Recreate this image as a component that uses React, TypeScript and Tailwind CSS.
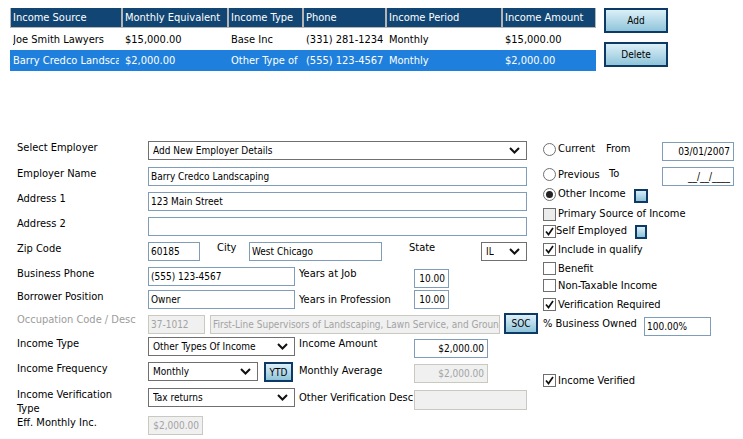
import React from "react";

const rows = [
  ["Joe Smith Lawyers", "$15,000.00", "Base Inc", "(331) 281-1234", "Monthly", "$15,000.00"],
  ["Barry Credco Landscaping", "$2,000.00", "Other Type of Income", "(555) 123-4567", "Monthly", "$2,000.00"],
];
const heads = ["Income Source", "Monthly Equivalent", "Income Type", "Phone", "Income Period", "Income Amount"];
const widths = ["w-[112px]", "w-[106px]", "w-[75px]", "w-[83px]", "w-[116px]", "w-[94px]"];

const Chevron = () => (
  <svg width="11" height="7" viewBox="0 0 11 7" className="shrink-0">
    <polyline points="1,1 5.5,5.5 10,1" fill="none" stroke="#111" strokeWidth="2" />
  </svg>
);

const Check = () => (
  <svg width="11" height="11" viewBox="0 0 11 11">
    <polyline points="2,5.5 4.5,8.5 9,2" fill="none" stroke="#111" strokeWidth="1.7" />
  </svg>
);

const Select = ({ w, value }: { w: string; value: string }) => (
  <div className={`${w} h-[19px] border border-[#707070] bg-white flex items-center justify-between pl-[4px] pr-[6px] text-[10px]`}>
    <span className="truncate">{value}</span>
    <Chevron />
  </div>
);

const Input = ({ w, value = "", right = false, disabled = false, h = "h-[19px]" }: { w: string; value?: string; right?: boolean; disabled?: boolean; h?: string }) => (
  <div
    className={`${w} ${h} border flex items-center text-[10px] overflow-hidden whitespace-nowrap ${
      disabled ? "bg-[#f0f0f0] border-[#c9c9c0] text-[#a3a3a3]" : "bg-white border-[#7f9db9] text-black"
    } ${right ? "justify-end pr-[3px]" : "pl-[2px]"}`}
  >
    {value}
  </div>
);

const Box = ({ checked = false, gray = false }: { checked?: boolean; gray?: boolean }) => (
  <div className={`w-[13px] h-[13px] border border-[#6f6f6f] flex items-center justify-center shrink-0 ${gray ? "bg-[#ececec]" : "bg-white"}`}>
    {checked && <Check />}
  </div>
);

const Radio = ({ on = false }: { on?: boolean }) => (
  <div className="w-[13px] h-[13px] rounded-full border border-[#6f6f6f] bg-white flex items-center justify-center shrink-0">
    {on && <div className="w-[7px] h-[7px] rounded-full bg-[#222]" />}
  </div>
);

const BlueSquare = ({ s = "w-[14px] h-[14px]" }: { s?: string }) => (
  <div className={`${s} border-2 border-[#0c3a64] bg-gradient-to-b from-[#d9eef7] to-[#8cc2d8]`} />
);

const Btn = ({ label, w, h }: { label: string; w: string; h: string }) => (
  <div className={`${w} ${h} border-2 border-[#0c3a64] bg-gradient-to-b from-[#dcf0f8] to-[#8fc4da] flex items-center justify-center text-[10px] text-black`}>
    {label}
  </div>
);

const Label = ({ children, w = "w-[131px]", gray = false }: { children: React.ReactNode; w?: string; gray?: boolean }) => (
  <div className={`${w} shrink-0 leading-[14px] ${gray ? "text-[#9c9c9c]" : "text-black"}`}>{children}</div>
);

export default function App() {
  return (
    <div className="w-[743px] h-[439px] bg-white overflow-hidden text-[11px] text-black font-['DejaVu_Sans_Condensed','DejaVu_Sans',sans-serif]">
      <div className="flex pt-[8px] pl-[10px] h-[70px]">
        <div className="flex flex-col">
          <div className="flex h-[20px] bg-[#114573]">
            {heads.map((h, i) => (
              <div key={h} className={`${widths[i]} h-full border border-[#b5b5b5] border-t-0 text-white pl-[2px] leading-[19px] whitespace-nowrap overflow-hidden`}>
                {h}
              </div>
            ))}
          </div>
          {rows.map((r, ri) => (
            <div key={ri} className={`flex ${ri === 0 ? "h-[21px] mt-[1px]" : "h-[21px] bg-[#1e80dc] text-white"}`}>
              {r.map((c, i) => (
                <div key={i} className={`${widths[i]} pl-[3px] pr-[3px]`}>
                  <div className="leading-[21px] whitespace-nowrap overflow-hidden">{c}</div>
                </div>
              ))}
            </div>
          ))}
        </div>
        <div className="ml-[8px] flex flex-col gap-[9px]">
          <Btn label="Add" w="w-[64px]" h="h-[25px]" />
          <Btn label="Delete" w="w-[64px]" h="h-[25px]" />
        </div>
      </div>

      <div className="flex mt-[71px]">
        <div className="w-[543px] pl-[17px] flex flex-col">
          <div className="flex h-[26px]">
            <Label>Select Employer</Label>
            <Select w="w-[379px]" value="Add New Employer Details" />
          </div>
          <div className="flex h-[25px]">
            <Label>Employer Name</Label>
            <Input w="w-[379px]" value="Barry Credco Landscaping" />
          </div>
          <div className="flex h-[25px]">
            <Label>Address 1</Label>
            <Input w="w-[379px]" value="123 Main Street" />
          </div>
          <div className="flex h-[25px]">
            <Label>Address 2</Label>
            <Input w="w-[379px]" />
          </div>
          <div className="flex h-[25px]">
            <Label>Zip Code</Label>
            <Input w="w-[52px]" value="60185" />
            <Label w="w-[32px] ml-[17px] -mt-[1px]">City</Label>
            <Input w="w-[133px]" value="West Chicago" />
            <Label w="w-[72px] ml-[27px] -mt-[1px]">State</Label>
            <Select w="w-[46px]" value="IL" />
          </div>
          <div className="flex h-[23px]">
            <Label>Business Phone</Label>
            <Input w="w-[147px]" value="(555) 123-4567" />
            <Label w="w-[115px] ml-[4px]">Years at Job</Label>
            <Input w="w-[35px] mt-[2px]" value="10.00" right />
          </div>
          <div className="flex h-[23px]">
            <Label>Borrower Position</Label>
            <Input w="w-[147px]" value="Owner" />
            <Label w="w-[115px] ml-[4px] mt-[3px]">Years in Profession</Label>
            <Input w="w-[35px]" value="10.00" right />
          </div>
          <div className="flex h-[24px]">
            <Label gray>Occupation Code / Desc</Label>
            <Input w="w-[57px] mt-[2px]" value="37-1012" disabled />
            <Input w="w-[290px] ml-[5px] mt-[2px]" value="First-Line Supervisors of Landscaping, Lawn Service, and Groundskeeping Workers" disabled />
            <div className="ml-[4px]">
              <Btn label="SOC" w="w-[34px]" h="h-[21px]" />
            </div>
          </div>
          <div className="flex h-[25px]">
            <Label>Income Type</Label>
            <Select w="w-[147px]" value="Other Types Of Income" />
            <Label w="w-[115px] ml-[4px]">Income Amount</Label>
            <Input w="w-[74px] mt-[2px]" value="$2,000.00" right />
          </div>
          <div className="flex h-[26px]">
            <Label>Income Frequency</Label>
            <Select w="w-[110px]" value="Monthly" />
            <div className="ml-[6px]">
              <Btn label="YTD" w="w-[29px]" h="h-[20px]" />
            </div>
            <Label w="w-[115px] ml-[6px] mt-[2px]">Monthly Average</Label>
            <Input w="w-[74px] mt-[2px]" value="$2,000.00" right disabled />
          </div>
          <div className="flex h-[28px]">
            <Label>
              Income Verification
              <br />
              Type
            </Label>
            <Select w="w-[147px]" value="Tax returns" />
            <Label w="w-[115px] ml-[4px] mt-[3px]">Other Verification Desc</Label>
            <Input w="w-[113px] mt-[2px]" h="h-[20px]" disabled />
          </div>
          <div className="flex h-[22px]">
            <Label>Eff. Monthly Inc.</Label>
            <Input w="w-[55px]" value="$2,000.00" right disabled />
          </div>
        </div>

        <div className="flex flex-col">
          <div className="flex h-[26px] items-start">
            <div className="mt-[2px]"><Radio /></div>
            <div className="ml-[2px] w-[48px] leading-[14px] mt-[1px]">Current</div>
            <div className="w-[56px] leading-[14px] mt-[1px]">From</div>
            <Input w="w-[72px] mt-[1px]" value="03/01/2007" right />
          </div>
          <div className="flex h-[20px] items-start">
            <div className="mt-[1px]"><Radio /></div>
            <div className="ml-[2px] w-[51px] leading-[14px] mt-[1px]">Previous</div>
            <div className="w-[53px] leading-[14px]">To</div>
            <Input w="w-[72px]" value="__/__/____" right />
          </div>
          <div className="flex h-[19px] items-start">
            <div className="mt-[1px]"><Radio on /></div>
            <div className="ml-[2px] w-[76px] leading-[14px]">Other Income</div>
            <div className="mt-[2px]"><BlueSquare /></div>
          </div>
          <div className="flex h-[17px] items-start">
            <div className="mt-[2px]"><Box gray /></div>
            <div className="ml-[2px] leading-[14px] mt-[1px]">Primary Source of Income</div>
          </div>
          <div className="flex h-[18px] items-start">
            <div className="mt-[2px]"><Box checked /></div>
            <div className="leading-[14px] w-[79px] mt-[1px]">Self Employed</div>
            <div className="mt-[2px]"><BlueSquare s="w-[12px] h-[14px]" /></div>
          </div>
          <div className="flex h-[19px] items-start">
            <div className="mt-[2px]"><Box checked /></div>
            <div className="ml-[2px] leading-[14px] mt-[2px]">Include in qualify</div>
          </div>
          <div className="flex h-[18px] items-start">
            <div className="mt-[2px]"><Box /></div>
            <div className="ml-[2px] leading-[14px] mt-[2px]">Benefit</div>
          </div>
          <div className="flex h-[19px] items-start">
            <div className="mt-[1px]"><Box /></div>
            <div className="ml-[2px] leading-[14px] mt-[1px]">Non-Taxable Income</div>
          </div>
          <div className="flex h-[20px] items-start">
            <div className="mt-[1px]"><Box checked /></div>
            <div className="ml-[2px] leading-[14px] mt-[1px]">Verification Required</div>
          </div>
          <div className="flex h-[21px] items-start">
            <div className="w-[101px] leading-[14px]">% Business Owned</div>
            <Input w="w-[67px]" value="100.00%" />
          </div>
          <div className="flex items-start mt-[36px]">
            <Box checked />
            <div className="ml-[2px] leading-[14px]">Income Verified</div>
          </div>
        </div>
      </div>
    </div>
  );
}
